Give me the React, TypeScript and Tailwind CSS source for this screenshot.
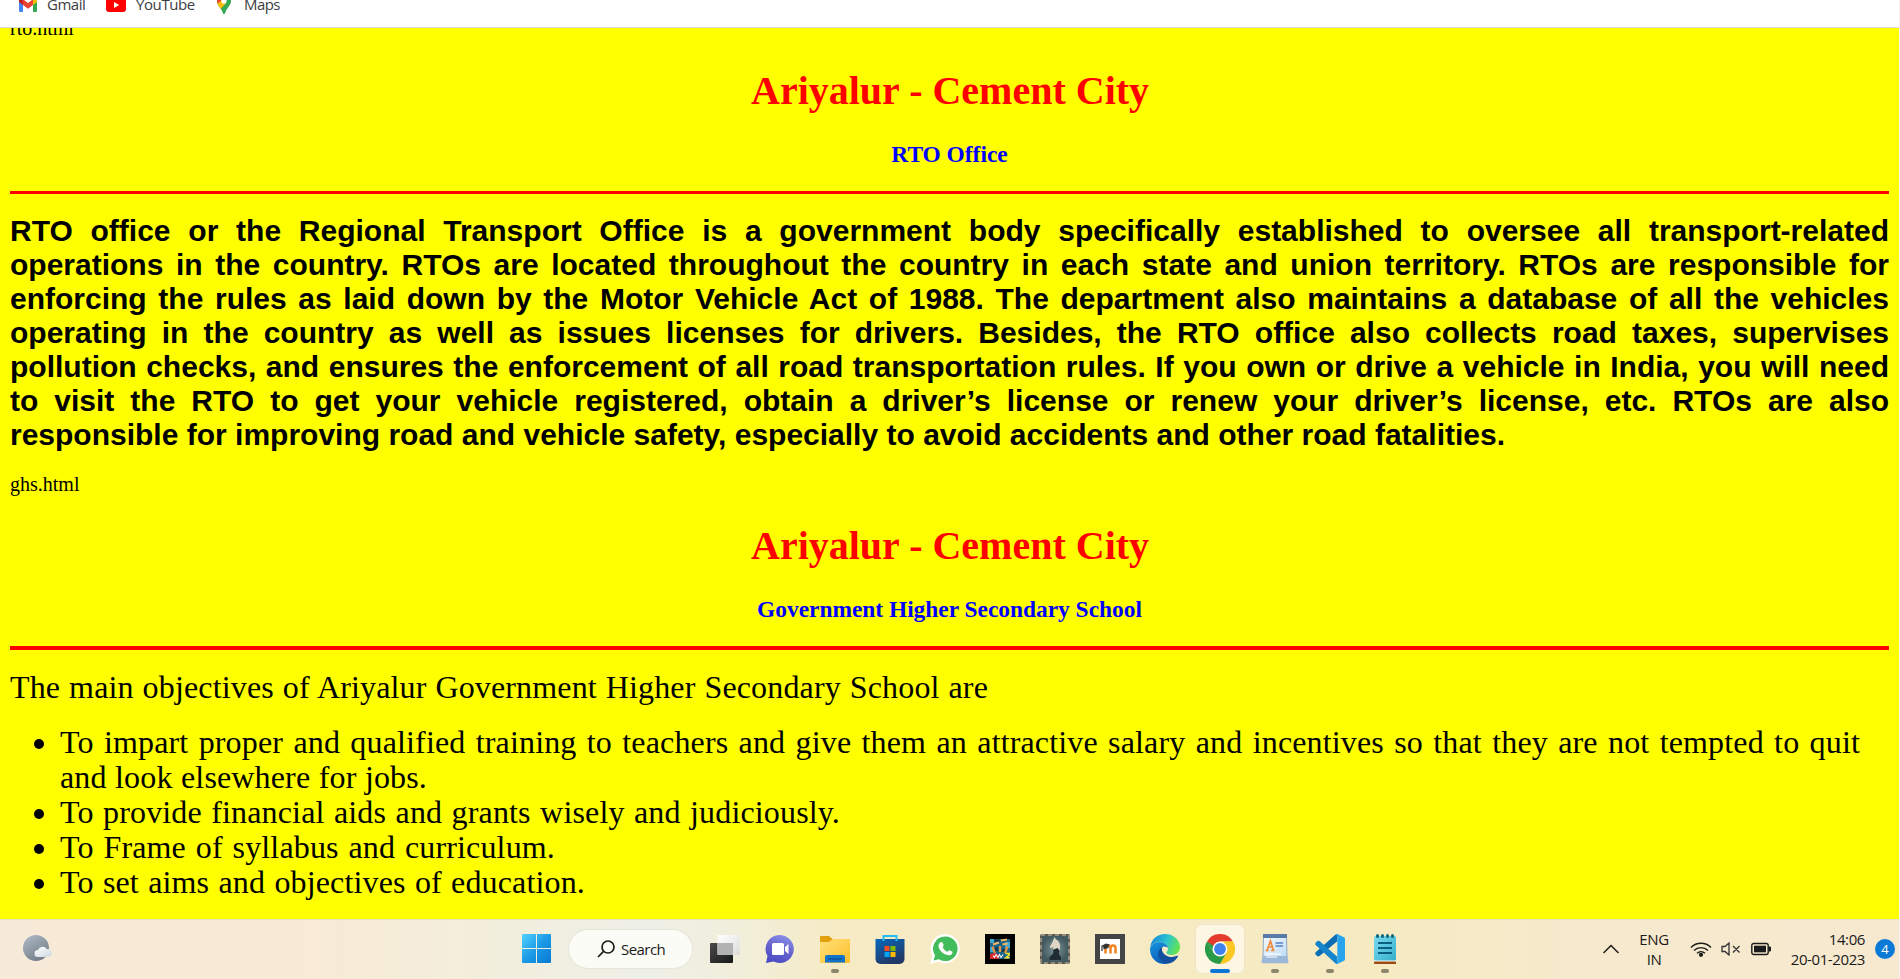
import React from "react";

const serif = "font-['Liberation_Serif',serif]";

function Line({ children, className }: { children: React.ReactNode; className: string }) {
  return <div className={`whitespace-nowrap [text-align-last:justify] ${className}`}>{children}</div>;
}

function GmailIcon() {
  return (
    <svg width="18" height="14" viewBox="0 0 18 14">
      <path d="M0 2v11a1 1 0 0 0 1 1h3V5z" fill="#4285f4" />
      <path d="M18 2v11a1 1 0 0 1-1 1h-3V5z" fill="#34a853" />
      <path d="M14 1.2V7l4-3V2c0-2-2.200-2.600-3.600-1.500z" fill="#fbbc04" />
      <path d="M4 7V1.200l5 3.800 5-3.800V7l-5 3.800z" fill="#ea4335" />
      <path d="M0 2v2l4 3V1.200L3.600.8C2.200-.3 0 .3 0 2z" fill="#c5221f" />
    </svg>
  );
}

function YouTubeIcon() {
  return (
    <svg width="20" height="14" viewBox="0 0 20 14">
      <rect width="20" height="14" rx="3" fill="#f00" />
      <path d="M8 4v6l5.200-3z" fill="#fff" />
    </svg>
  );
}

function MapsIcon() {
  return (
    <svg width="14" height="20" viewBox="0 0 14 20">
      <defs>
        <clipPath id="pin">
          <path d="M7 0a7 7 0 0 1 7 7c0 4-3.500 6-5.500 11-.4 1.500-.8 2-1.500 2s-1.100-.5-1.500-2C3.500 13 0 11 0 7a7 7 0 0 1 7-7z" />
        </clipPath>
      </defs>
      <g clipPath="url(#pin)">
        <path d="M0 0h14v20H0z" fill="#34a853" />
        <path d="M0 14L14-1v-4H0z" fill="#4285f4" />
        <path d="M0 0l7 7-5 6-4-2z" fill="#fbbc04" />
        <path d="M0 8V2l2.500 0L6 5 1.500 10z" fill="#ea4335" />
        <path d="M0 10L5 6l4 3-7 8z" fill="#fbbc04" />
      </g>
      <circle cx="7" cy="7" r="2.600" fill="#fff" />
    </svg>
  );
}

function WeatherIcon() {
  return (
    <svg width="30" height="28" viewBox="0 0 30 28">
      <defs>
        <linearGradient id="moon" x1="0" y1="0" x2=".6" y2="1">
          <stop stopColor="#b0bcc7" />
          <stop offset="1" stopColor="#747f8a" />
        </linearGradient>
        <linearGradient id="cloud" x1="0" y1="0" x2="1" y2="1">
          <stop stopColor="#fff" />
          <stop offset="1" stopColor="#ccd6e0" />
        </linearGradient>
      </defs>
      <circle cx="13" cy="13" r="13" fill="url(#moon)" />
      <path d="M15 22a3.500 3.500 0 0 1 0-7 5 5 0 0 1 9-.8 4 4 0 1 1 0 7.800z" fill="url(#cloud)" />
    </svg>
  );
}

function StartIcon() {
  return (
    <svg width="29" height="29" viewBox="0 0 29 29">
      <defs>
        <linearGradient id="win" gradientUnits="userSpaceOnUse" x1="0" y1="0" x2="29" y2="29">
          <stop stopColor="#50d4ff" />
          <stop offset=".5" stopColor="#1c9ae6" />
          <stop offset="1" stopColor="#0878d4" />
        </linearGradient>
      </defs>
      <path d="M1 0h13v14H0V1a1 1 0 0 1 1-1zM15 0h13a1 1 0 0 1 1 1v13H15zM0 15h14v14H1a1 1 0 0 1-1-1zM15 15h14v13a1 1 0 0 1-1 1H15z" fill="url(#win)" />
    </svg>
  );
}

function TaskViewIcon() {
  return (
    <svg width="30" height="30" viewBox="0 0 30 30">
      <defs>
        <linearGradient id="tvd" x1="0" y1="0" x2="1" y2="1">
          <stop stopColor="#4b4b4b" />
          <stop offset="1" stopColor="#171717" />
        </linearGradient>
        <linearGradient id="tvl" x1="0" y1="0" x2="1" y2="1">
          <stop stopColor="#fff" />
          <stop offset="1" stopColor="#dcdcdc" />
        </linearGradient>
      </defs>
      <rect x="0" y="9" width="23" height="20" rx="1" fill="url(#tvd)" />
      <rect x="7.500" y="1" width="22.500" height="20" rx="1" fill="url(#tvl)" />
      <path d="M7.500 9H23v12H7.500z" fill="#b2b2b2" />
    </svg>
  );
}

function ChatIcon() {
  return (
    <svg width="30" height="30" viewBox="0 0 30 30">
      <defs>
        <linearGradient id="chat" x1=".8" y1="0" x2=".4" y2="1">
          <stop stopColor="#8b94ea" />
          <stop offset=".5" stopColor="#6a66cf" />
          <stop offset="1" stopColor="#4c4cc4" />
        </linearGradient>
      </defs>
      <path d="M15 1a14 14 0 1 1-6.500 26.500L1 29l1.500-7A14 14 0 0 1 15 1z" fill="url(#chat)" />
      <rect x="7" y="9" width="12" height="12" rx="1.500" fill="#fff" />
      <path d="M20 13l3.500-3v10L20 17z" fill="#fff" />
    </svg>
  );
}

function ExplorerIcon() {
  return (
    <svg width="30" height="30" viewBox="0 0 30 30">
      <defs>
        <linearGradient id="fold" x1="0" y1="0" x2="1" y2="1">
          <stop stopColor="#ffe07a" />
          <stop offset="1" stopColor="#ffbf2b" />
        </linearGradient>
      </defs>
      <path d="M0 3a1 1 0 0 1 1-1h8l3.500 3H29a1 1 0 0 1 1 1v4H0z" fill="#e0a010" />
      <path d="M0 8h9l4-3h16a1 1 0 0 1 1 1v22a1 1 0 0 1-1 1H1a1 1 0 0 1-1-1z" fill="url(#fold)" />
      <path d="M5 28.500V23a2 2 0 0 1 2-2h16a2 2 0 0 1 2 2v5.500z" fill="#1174c8" />
      <path d="M8 25h14" stroke="#0b4e90" strokeWidth="1.200" />
    </svg>
  );
}

function StoreIcon() {
  return (
    <svg width="30" height="30" viewBox="0 0 30 30">
      <defs>
        <linearGradient id="store" x1="0" y1="0" x2=".5" y2="1">
          <stop stopColor="#0868ba" />
          <stop offset="1" stopColor="#223766" />
        </linearGradient>
      </defs>
      <path d="M.5 5h29v20a5 5 0 0 1-5 5h-19a5 5 0 0 1-5-5z" fill="url(#store)" />
      <path d="M8.500 7V2h13v5" fill="none" stroke="#22bdf2" strokeWidth="2" />
      <path d="M9.500 12H14.500v5h-5z" fill="#f25022" />
      <path d="M15.500 12H20.500v5h-5z" fill="#7fba00" />
      <path d="M9.500 18H14.500v5h-5z" fill="#00a4ef" />
      <path d="M15.500 18H20.500v5h-5z" fill="#ffb900" />
    </svg>
  );
}

function WhatsAppIcon() {
  return (
    <svg width="30" height="30" viewBox="0 0 30 30">
      <path d="M15.200 0a14.600 14.600 0 1 1-7 27.500L0 30l2.400-8A14.700 14.700 0 0 1 15.200 0z" fill="#fff" />
      <path d="M15.300 2.500a12.300 12.300 0 1 1-6.400 22.800L3.600 26.600 5 21.400A12.300 12.300 0 0 1 15.300 2.500z" fill="#43bd5b" />
      <path d="M10.600 8.200c.5-.4 1.500-.4 1.900.3l1.200 2.700c.2.6-1.200 2-1 2.400 1 2 2.500 3.300 4.700 4.200.6.100 1.400-1.700 2-1.500l2.700 1.300c.5.300.4 1.200.1 1.900-.6 1.400-2.400 2-3.700 1.800-5.300-.9-9.400-4.900-10-9.100-.2-1.600.9-3.100 2.100-4z" fill="#fff" />
    </svg>
  );
}

function CricketIcon() {
  return (
    <svg width="30" height="30" viewBox="0 0 30 30">
      <path d="M0 0h30v30H0z" fill="#000" />
      <path d="M5 5h20v20H5z" fill="#1c6386" />
      <path d="M5 5h4v4H5zM20 8h5v6h-5zM5 13h3v5H5z" fill="#3fa9d0" />
      <path d="M9 5h6v3H9zM10 13h3v4h-3zM17 15h3v3h-3z" fill="#123c52" />
      <path d="M7.500 12.500l2.500 7M15 12v6M22.500 12.500L20 19" stroke="#e8933f" strokeWidth="2.200" />
      <path d="M8 10.500l6-2M16 6.500l6-1M17.500 10.500l5-1" stroke="#f2b264" strokeWidth="2" />
      <path d="M5 20l5-1 4 2v4H5z" fill="#d8252a" />
      <path d="M8 21.500l1.500 2 1.500-3 2 3 1.500-3 1.500 3 2-3" fill="none" stroke="#f3f3f3" strokeWidth="1.100" />
      <path d="M20.500 19.500H24v1.700l-3 2.500h3.500" fill="none" stroke="#f5e529" strokeWidth="1.600" />
    </svg>
  );
}

function ChessIcon() {
  return (
    <svg width="30" height="30" viewBox="0 0 30 30">
      <defs>
        <radialGradient id="chess">
          <stop stopColor="#7f9598" />
          <stop offset="1" stopColor="#425a60" />
        </radialGradient>
      </defs>
      <rect width="30" height="30" rx="2" fill="#5b5850" />
      <rect x="1" y="1" width="28" height="28" fill="none" stroke="#a89d8a" strokeWidth="1.600" strokeDasharray="4 3" />
      <path d="M2 2h26v26H2z" fill="url(#chess)" />
      <path d="M14.500 3l1.500 2.500c2.500 1 4 3.500 4.200 6.500l-.7 5h-7l1-4-2.500 1.300-1.300-1.300 2.500-4.500z" fill="#ddd6c4" />
      <path d="M12.500 16l5-2 2 2.500-.8 3.500 2.300 3v3H9.500v-3l3.500-3 .5-2.500z" fill="#202c31" />
    </svg>
  );
}

function MoodleIcon() {
  return (
    <svg width="30" height="30" viewBox="0 0 30 30">
      <path d="M0 0h30v30H0z" fill="#444446" />
      <path d="M5 5h20v20H5z" fill="#fff" />
      <path d="M10.500 19.500V14a2.500 2.500 0 0 1 5 0v5.500M15.500 14a2.500 2.500 0 0 1 5 0v5.500" fill="none" stroke="#f58220" strokeWidth="2.500" />
      <path d="M6 12l5-2.500 4 1-4.500 3z" fill="#333" />
      <path d="M9 11v3.500l4-1v-3M7 12v5" stroke="#333" strokeWidth="1.200" fill="#333" />
    </svg>
  );
}

function EdgeIcon() {
  return (
    <svg width="30" height="30" viewBox="0 0 30 30">
      <defs>
        <linearGradient id="edgeTop" x1="0" y1=".3" x2="1" y2=".6">
          <stop stopColor="#1688d8" />
          <stop offset=".5" stopColor="#2cc3d0" />
          <stop offset="1" stopColor="#66e648" />
        </linearGradient>
        <linearGradient id="edgeLeft" x1="0" y1="0" x2=".5" y2="1">
          <stop stopColor="#1592e0" />
          <stop offset="1" stopColor="#0c60b8" />
        </linearGradient>
      </defs>
      <path d="M.3 12.500C1.500 5 7.500 0 15 0c9 0 15 6.500 15 13 0 5-3.500 8-8 8-3.500 0-6-1.200-5.600-2.700.2-.7 1.600-1.600 1.600-3.800C18 11 14 8.300 9.500 8.300 5.500 8.300 2 10 .3 12.500z" fill="url(#edgeTop)" />
      <path d="M0 15C.5 10.500 5 8.300 9.500 8.300c4.500 0 8.500 2.700 8.500 6-.5-1-2-1.800-3.500-1.800-3.500 0-5.500 4-4 9 1 4 4.500 7.500 8 8C9 32 0 25.500 0 15z" fill="url(#edgeLeft)" />
      <path d="M12.500 13c-5 2-5.500 8-2.500 12.500 2.200 3.200 6 4.500 9 4 4-1 7-3.600 9-7 .3-.8-.4-1-1-.7-5 2.600-12.500.7-14.700-4.600-.6-1.500-.5-2.900.2-4.200z" fill="#124f9e" />
    </svg>
  );
}

function ChromeIcon() {
  return (
    <svg width="30" height="30" viewBox="0 0 30 30">
      <path d="M15 15L2 7.500A15 15 0 0 1 28 7.500H15z" fill="#e33b2e" />
      <path d="M15 15v-7.500h13A15 15 0 0 1 15 30l6.500-11.200z" fill="#fcc821" />
      <path d="M15 15l6.500 3.700L15 30A15 15 0 0 1 2 7.500l6.500 11.200z" fill="#2a9b47" />
      <path d="M2 7.500h13v7.500l-6.500 0z" fill="#e33b2e" />
      <path d="M2 7.500l6.500 11.200 1.500-6z" fill="#2a9b47" />
      <circle cx="15" cy="15" r="7.500" fill="#fff" />
      <circle cx="15" cy="15" r="5.900" fill="#3f82ee" />
    </svg>
  );
}

function WordPadIcon() {
  return (
    <svg width="30" height="30" viewBox="0 0 30 30">
      <defs>
        <linearGradient id="wp" x1="0" y1="0" x2="1" y2="1">
          <stop stopColor="#f7fbff" />
          <stop offset="1" stopColor="#bcdcf5" />
        </linearGradient>
      </defs>
      <path d="M3.500 1h23l.5 22H3z" fill="url(#wp)" stroke="#8fa9c9" />
      <path d="M3 0h24v4H3z" fill="#587ba8" />
      <path d="M2.500 22h25l1 6a1 1 0 0 1-1 1.200H2.500a1 1 0 0 1-1-1.200z" fill="#9cb8d8" />
      <path d="M5.500 16.500h3M11 16.500h3.500M7 16.500L10.500 7l3 9.500M8.500 13h4" fill="none" stroke="#f28a3d" strokeWidth="1.700" />
      <path d="M15.500 9H23M15.500 12H23" stroke="#5a80c4" strokeWidth="1.500" />
      <path d="M6 20h15M6 23h11" stroke="#fff" strokeWidth="1.200" />
    </svg>
  );
}

function CodeIcon() {
  return (
    <svg width="30" height="30" viewBox="0 0 30 30">
      <path d="M22 7.500L4.500 22 2.800 22.500.4 20.500V18.500L20 1l2.500-1z" fill="#0b6eb4" />
      <path d="M22 22.500L4.500 7 2.800 6.800.4 8.800v2L20 29l2.500 1z" fill="#1684ca" />
      <path d="M22.200 0L29 3.200a1.500 1.500 0 0 1 1 1.500v20.600a1.500 1.500 0 0 1-1 1.500L22.200 30c-1 .2-2-.6-2.700-1.200 1.200 1 2.800.2 2.800-1.300v-25C22.300 1 20.700.2 19.500 1.200 20.200.6 21.200-.2 22.200 0z" fill="#27a4ee" />
    </svg>
  );
}

function NotepadIcon() {
  return (
    <svg width="30" height="30" viewBox="0 0 30 30">
      <defs>
        <linearGradient id="np" x1="0" y1="0" x2="1" y2="1">
          <stop stopColor="#7bdcf0" />
          <stop offset="1" stopColor="#35aeca" />
        </linearGradient>
      </defs>
      <path d="M4 26h22v4H5a1 1 0 0 1-1-1z" fill="#9a4c12" />
      <path d="M4 25.500h22v2H4z" fill="#fff" />
      <rect x="4" y="2" width="22" height="24.500" rx="1.500" fill="url(#np)" />
      <path d="M7.500 1.500v1M12.500 1.500v1M17.500 1.500v1M22.500 1.500v1" stroke="#15697d" strokeWidth="3" strokeLinecap="round" />
      <path d="M8 9h14M8 14h14M8 19h14" stroke="#0b5f80" strokeWidth="1.800" />
    </svg>
  );
}

type App = { name: string; icon: React.ReactNode; mark?: "open" | "active" };

const apps: App[] = [
  { name: "tasks", icon: <TaskViewIcon /> },
  { name: "chat", icon: <ChatIcon /> },
  { name: "explorer", icon: <ExplorerIcon />, mark: "open" },
  { name: "store", icon: <StoreIcon /> },
  { name: "whatsapp", icon: <WhatsAppIcon /> },
  { name: "cricket", icon: <CricketIcon /> },
  { name: "chess", icon: <ChessIcon /> },
  { name: "moodle", icon: <MoodleIcon /> },
  { name: "edge", icon: <EdgeIcon /> },
  { name: "chrome", icon: <ChromeIcon />, mark: "active" },
  { name: "wordpad", icon: <WordPadIcon />, mark: "open" },
  { name: "code", icon: <CodeIcon />, mark: "open" },
  { name: "notepad", icon: <NotepadIcon />, mark: "open" },
];

function TaskButton({ icon, mark }: App) {
  return (
    <div className="flex h-full w-[55px] items-center justify-center">
      <div
        className={`relative flex h-12 w-12 items-center justify-center rounded-md ${
          mark === "active" ? "bg-[#fcf6e3] shadow-[0_0_0_1px_#f0e5c8]" : ""
        }`}
      >
        {icon}
        {mark === "open" && <span className="absolute bottom-0 left-5 h-1 w-2 rounded-full bg-[#8c866d]" />}
        {mark === "active" && <span className="absolute bottom-0 left-[14px] h-1 w-5 rounded-full bg-[#0878d4]" />}
      </div>
    </div>
  );
}

function Heading({ title, subtitle }: { title: string; subtitle: string }) {
  return (
    <div className="flex flex-col items-center">
      <h1 className="h-[46px] text-[40px] font-bold leading-[46px] text-[#ff0000]">
        <Line className="w-[397px]">{title}</Line>
      </h1>
      <h3 className="mt-[26px] h-7 text-[23.4px] font-bold leading-7 text-[#0000ff]">{subtitle}</h3>
    </div>
  );
}

const rto = [
  "RTO office or the Regional Transport Office is a government body specifically established to oversee all transport-related",
  "operations in the country. RTOs are located throughout the country in each state and union territory. RTOs are responsible for",
  "enforcing the rules as laid down by the Motor Vehicle Act of 1988. The department also maintains a database of all the vehicles",
  "operating in the country as well as issues licenses for drivers. Besides, the RTO office also collects road taxes, supervises",
  "pollution checks, and ensures the enforcement of all road transportation rules. If you own or drive a vehicle in India, you will need",
  "to visit the RTO to get your vehicle registered, obtain a driver’s license or renew your driver’s license, etc. RTOs are also",
];

function Bullet() {
  return <span className="absolute -left-[26px] top-[14px] h-[10px] w-[10px] rounded-full bg-black" />;
}

export default function App() {
  return (
    <div className="flex h-[979px] w-[1900px] flex-col overflow-hidden border-r border-[#f4f4f4] bg-white">
      <header className="flex h-7 shrink-0 items-start overflow-hidden border-b border-[#dadce0] pl-[19px] font-['Open_Sans','Noto_Sans',sans-serif] text-[15px] leading-5 text-[#3c4043]">
        <div className="-mt-0.5 h-4 w-7"><GmailIcon /></div>
        <div className="-mt-[6px] w-[59px] tracking-[-0.5px]">Gmail</div>
        <div className="-mt-0.5 h-4 w-[30px]"><YouTubeIcon /></div>
        <div className="-mt-[6px] w-[81px] tracking-[-0.4px]">YouTube</div>
        <div className="-mt-[6px] w-[27px]"><MapsIcon /></div>
        <div className="-mt-[6px] tracking-[-0.6px]">Maps</div>
      </header>

      <main className={`h-[891px] shrink-0 overflow-hidden bg-[#ffff00] px-[10px] text-black ${serif}`}>
        <div className="-mt-3 mb-7 h-6 text-[20px] leading-6">rto.html</div>
        <Heading title="Ariyalur - Cement City" subtitle="RTO Office" />
        <div className="mt-[23px] h-[3px] bg-[#ff0000]" />
        <div className="mt-5 font-['Liberation_Sans',Arial,sans-serif] text-[30px] font-bold leading-[34px]">
          {rto.map((t) => (
            <Line key={t} className="h-[34px]">{t}</Line>
          ))}
          <Line className="h-[34px] w-[1495px]">
            responsible for improving road and vehicle safety, especially to avoid accidents and other road fatalities.
          </Line>
        </div>
        <div className="mb-[27px] mt-5 h-6 text-[20px] leading-6">ghs.html</div>
        <Heading title="Ariyalur - Cement City" subtitle="Government Higher Secondary School" />
        <div className="mt-[23px] h-1 bg-[#ff0000]" />
        <div className="mt-5 text-[32px] leading-[35px] tracking-[0.15px]">
          <Line className="h-[35px] w-[978px]">The main objectives of Ariyalur Government Higher Secondary School are</Line>
          <ul className="mt-5 pl-[50px]">
            <li className="relative">
              <Bullet />
              <Line className="h-[35px] w-[1800px]">
                To impart proper and qualified training to teachers and give them an attractive salary and incentives so that they are not tempted to quit
              </Line>
              <Line className="h-[35px] w-[367px]">and look elsewhere for jobs.</Line>
            </li>
            <li className="relative"><Bullet /><Line className="h-[35px] w-[780px]">To provide financial aids and grants wisely and judiciously.</Line></li>
            <li className="relative"><Bullet /><Line className="h-[35px] w-[495px]">To Frame of syllabus and curriculum.</Line></li>
            <li className="relative"><Bullet /><Line className="h-[35px] w-[525px]">To set aims and objectives of education.</Line></li>
          </ul>
        </div>
      </main>

      <footer className="flex h-[60px] shrink-0 items-center border-t border-[#e6dfc4] bg-[linear-gradient(90deg,#f8ead8_0%,#f8ead6_16%,#f3eedb_25%,#eeefe7_34%,#f1eeda_39%,#f6ebc5_44%,#f6eac2_72%,#f6e9cd_84%,#f7e9cf_100%)] pb-0.5 font-['Open_Sans','Noto_Sans',sans-serif] text-[#1b1b1b]">
        <div className="w-[509px] pl-[23px]"><WeatherIcon /></div>
        <div className="flex w-[55px] justify-center"><StartIcon /></div>
        <div className="mx-[5px] flex h-[38px] w-[123px] items-center rounded-full bg-[#fcfcf7] pl-[28px] shadow-[0_0_1px_1px_#e6e5da]">
          <svg width="18" height="18" viewBox="0 0 18 18" fill="none" stroke="#1b1b1b" strokeWidth="1.700">
            <circle cx="11" cy="7" r="6" />
            <path d="M6.800 11.200L1 17" />
          </svg>
          <span className="ml-[6px] text-[15px] leading-5 tracking-[-0.55px]">Search</span>
        </div>
        <div className="flex h-full w-[878px]">
          {apps.map((a) => (
            <TaskButton key={a.name} {...a} />
          ))}
        </div>
        <div className="flex flex-1 items-center pl-[28px] text-[15px] leading-5">
          <svg width="16" height="10" viewBox="0 0 16 10" fill="none" stroke="#1b1b1b" strokeWidth="1.500"><path d="M.5 9L8 1.500 15.500 9" /></svg>
          <div className="ml-[16px] w-[38px] text-center tracking-[-0.4px]">ENG<br />IN</div>
          <svg className="ml-[17px]" width="22" height="16" viewBox="0 0 22 16" fill="none" stroke="#1b1b1b" strokeWidth="1.400">
            <path d="M1 6.500a14 14 0 0 1 20 0M4 9.500a10 10 0 0 1 14 0M7 12.300a6 6 0 0 1 8 0" />
            <circle cx="11" cy="13.800" r="1.400" fill="#1b1b1b" />
          </svg>
          <svg className="ml-[9px]" width="20" height="14" viewBox="0 0 20 14" fill="none" stroke="#333" strokeWidth="1.300">
            <path d="M1 4.500h3L8 1v12L4 9.500H1zM12 4l6.500 6.500M18.500 4L12 10.500" />
          </svg>
          <svg className="ml-[10px]" width="21" height="14" viewBox="0 0 21 14">
            <rect x=".8" y="1.500" width="16.400" height="11" rx="2" fill="none" stroke="#1b1b1b" strokeWidth="1.400" />
            <rect x="3" y="3.700" width="12" height="6.600" fill="#1b1b1b" />
            <path d="M18 5h1.500v4H18z" fill="#1b1b1b" stroke="#1b1b1b" />
          </svg>
          <div className="flex-1 text-right tracking-[-0.4px]">14:06<br />20-01-2023</div>
          <div className="ml-[10px] mr-1 flex h-5 w-5 items-center justify-center rounded-full bg-[#0a7ad6] text-[13px] text-white">4</div>
        </div>
      </footer>
    </div>
  );
}
